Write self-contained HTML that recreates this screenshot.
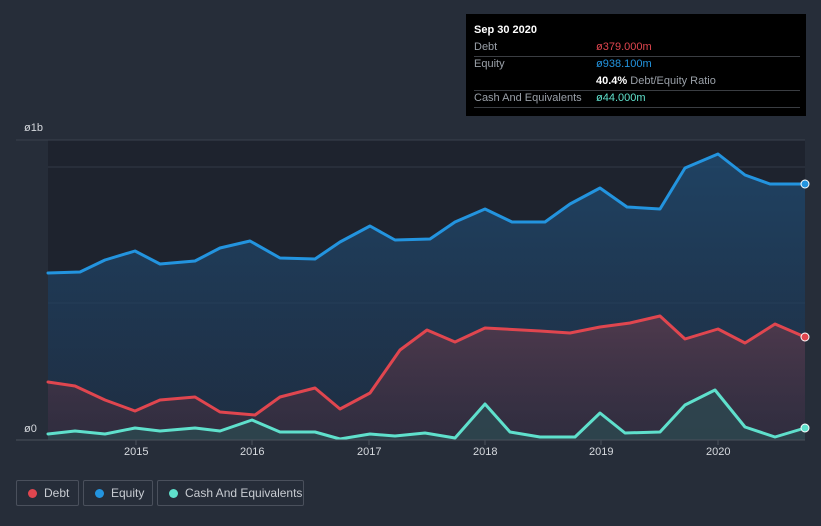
<!DOCTYPE html>
<html><head><style>
body{margin:0;width:821px;height:526px;background:#262d39;font-family:"Liberation Sans",sans-serif;overflow:hidden;position:relative}
.tt{position:absolute;left:466px;top:14px;width:340px;height:102px;background:#000;font-size:11px;color:#9aa0a8}
.tt .r{position:absolute;left:8px;right:6px;border-bottom:1px solid #3a3d42;height:17px;line-height:17px}
.tt .v{position:absolute;left:122px}
.lg{position:absolute;top:480px;height:26px;border:1px solid #4a505c;border-radius:2px;color:#c8ccd2;font-size:12px;line-height:24px;box-sizing:border-box;padding-left:27px;white-space:nowrap}
.lg i{position:absolute;left:11px;top:8px;width:9px;height:9px;border-radius:50%}
.ax{position:absolute;color:#d6d9de;font-size:11px}
</style></head><body>
<svg width="821" height="526" style="position:absolute;left:0;top:0">
<defs>
<linearGradient id="ge" x1="0" y1="0" x2="0" y2="1"><stop offset="0" stop-color="#1f4a70" stop-opacity=".8"/><stop offset="1" stop-color="#1f3550" stop-opacity=".6"/></linearGradient>
<linearGradient id="gd" x1="0" y1="0" x2="0" y2="1"><stop offset="0" stop-color="#5a3a4c" stop-opacity=".8"/><stop offset="1" stop-color="#3a2c3c" stop-opacity=".6"/></linearGradient>
</defs>
<rect x="48" y="140" width="757" height="300" fill="#1e232e"/>
<line x1="16" y1="140" x2="805" y2="140" stroke="#3a414d"/>
<line x1="48" y1="167" x2="805" y2="167" stroke="#323945"/>
<line x1="48" y1="303" x2="805" y2="303" stroke="#323945"/>
<polygon fill="url(#ge)" points="48,440 48,273 80,272 105,260 135,251 160,264 195,261 220,248 250,241 280,258 315,259 340,242 370,226 395,240 430,239 455,222 485,209 512,222 545,222 570,204 600,188 627,207 660,209 685,168 718,154 745,175 770,184 805,184 805,440"/>
<polygon fill="url(#gd)" points="48,440 48,382 75,386 105,400 135,411 160,400 195,397 220,412 255,415 280,397 315,388 340,409 370,393 400,350 427,330 455,342 485,328 540,331 570,333 600,327 630,323 660,316 685,339 718,329 745,343 775,324 805,337 805,440"/>
<polygon fill="#2d4850" opacity=".8" points="48,440 48,434 75,431 105,434 135,428 160,431 195,428 220,431 252,420 280,432 315,432 340,439 370,434 395,436 425,433 455,438 485,404 510,432 540,437 575,437 600,413 625,433 660,432 685,405 715,390 745,427 775,437 805,428 805,440"/>
<g fill="none" stroke-width="3" stroke-linejoin="round" stroke-linecap="round">
<polyline stroke="#2394df" points="48,273 80,272 105,260 135,251 160,264 195,261 220,248 250,241 280,258 315,259 340,242 370,226 395,240 430,239 455,222 485,209 512,222 545,222 570,204 600,188 627,207 660,209 685,168 718,154 745,175 770,184 805,184"/>
<polyline stroke="#e0464f" points="48,382 75,386 105,400 135,411 160,400 195,397 220,412 255,415 280,397 315,388 340,409 370,393 400,350 427,330 455,342 485,328 540,331 570,333 600,327 630,323 660,316 685,339 718,329 745,343 775,324 805,337"/>
<polyline stroke="#5fe0cc" points="48,434 75,431 105,434 135,428 160,431 195,428 220,431 252,420 280,432 315,432 340,439 370,434 395,436 425,433 455,438 485,404 510,432 540,437 575,437 600,413 625,433 660,432 685,405 715,390 745,427 775,437 805,428"/>
</g>
<line x1="16" y1="440" x2="805" y2="440" stroke="#4a515c"/>
<g stroke="#4a515c"><line x1="136" y1="440" x2="136" y2="445"/><line x1="252" y1="440" x2="252" y2="445"/><line x1="369" y1="440" x2="369" y2="445"/><line x1="485" y1="440" x2="485" y2="445"/><line x1="601" y1="440" x2="601" y2="445"/><line x1="718" y1="440" x2="718" y2="445"/></g>
<circle cx="805" cy="184" r="4" fill="#2394df" stroke="#fff" stroke-width="1"/>
<circle cx="805" cy="337" r="4" fill="#e0464f" stroke="#fff" stroke-width="1"/>
<circle cx="805" cy="428" r="4" fill="#5fe0cc" stroke="#fff" stroke-width="1"/>
</svg>
<div class="ax" style="left:24px;top:122px">ø1b</div>
<div class="ax" style="left:24px;top:423px">ø0</div>
<div class="ax" style="left:124px;top:446px">2015</div>
<div class="ax" style="left:240px;top:446px">2016</div>
<div class="ax" style="left:357px;top:446px">2017</div>
<div class="ax" style="left:473px;top:446px">2018</div>
<div class="ax" style="left:589px;top:446px">2019</div>
<div class="ax" style="left:706px;top:446px">2020</div>
<div class="tt">
<div style="position:absolute;left:8px;top:10px;color:#fff;font-weight:bold">Sep 30 2020</div>
<div class="r" style="top:25px">Debt<span class="v" style="color:#e0464f">ø379.000m</span></div>
<div class="r" style="top:42px;border:none">Equity<span class="v" style="color:#2394df">ø938.100m</span></div>
<div class="r" style="top:59px"><span class="v" style="left:122px"><b style="color:#fff">40.4%</b> Debt/Equity Ratio</span></div>
<div class="r" style="top:76px">Cash And Equivalents<span class="v" style="color:#5fe0cc">ø44.000m</span></div>
</div>
<div class="lg" style="left:16px;width:63px"><i style="background:#e0464f"></i>Debt</div>
<div class="lg" style="left:83px;width:70px"><i style="background:#2394df"></i>Equity</div>
<div class="lg" style="left:157px;width:147px"><i style="background:#5fe0cc"></i>Cash And Equivalents</div>
</body></html>
